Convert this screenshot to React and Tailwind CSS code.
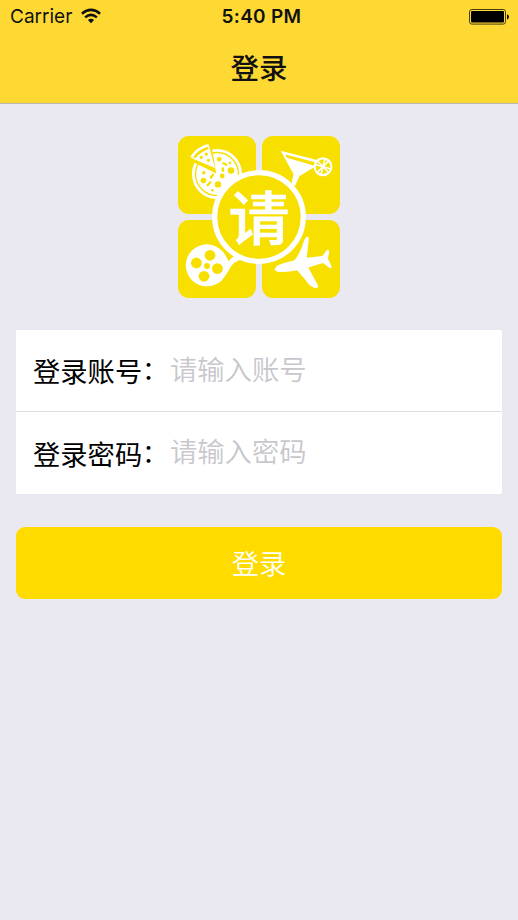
const cjk = "font-['Liberation_Sans','Noto_Sans_CJK_SC',sans-serif]";

function WifiIcon() {
  return (
    <svg className="ml-[9px] h-4 w-5" viewBox="0 0 20 16" fill="none" stroke="#111" strokeWidth="2.5">
      <path d="M0.9 5.7 Q10 -1.9 19.1 5.7" />
      <path d="M4.1 9.4 Q10 4.4 15.9 9.4" />
      <path d="M6.9 12.1 Q10 9.3 13.1 12.1 L10 15.3Z" fill="#111" stroke="none" />
    </svg>
  );
}

function BatteryIcon() {
  return (
    <svg className="mt-px h-4 w-10" viewBox="0 0 40 16">
      <rect x="0.5" y="0.5" width="36" height="14.6" rx="2.3" fill="none" stroke="#4b3f10" strokeWidth="1" />
      <rect x="2" y="2" width="33" height="11.6" rx="1" fill="#000" />
      <path d="M38 5.2 Q40 5.8 40 7.8 Q40 9.8 38 10.4Z" fill="#000" />
    </svg>
  );
}

function Logo() {
  const y = '#f7df00';
  return (
    <svg className="h-[162px] w-[162px]" viewBox="178 136 162 162">
      <g fill={y}>
        <rect x="178" y="136" width="78" height="78" rx="11" />
        <rect x="262" y="136" width="78" height="78" rx="11" />
        <rect x="178" y="220" width="78" height="78" rx="11" />
        <rect x="262" y="220" width="78" height="78" rx="11" />
      </g>

      {/* pizza */}
      <circle cx="217" cy="174" r="23.6" fill={y} stroke="#fff" strokeWidth="2.9" />
      <circle cx="217" cy="174" r="20.8" fill="#fff" />
      <path d="M216.2 173.4 L190 160.6 L187 150 L200 143 L211.8 147Z" fill={y} />
      <path d="M214.2 166.6 L195 158.4 Q200.5 152 208.6 149Z" fill="#fff" />
      <path d="M191.4 157.4 Q197.5 148 208.5 145.3" fill="none" stroke="#fff" strokeWidth="2.7" />
      <path d="M191.6 157.3 L213.9 166.8 L208.3 145.3" fill="none" stroke="#fff" strokeWidth="1.3" />
      <g fill={y}>
        <circle cx="201.3" cy="157.4" r="1.6" />
        <circle cx="206.3" cy="154.2" r="1.6" />
        <circle cx="208.4" cy="160.3" r="1.6" />
        <circle cx="219.2" cy="159.3" r="2.3" />
        <circle cx="231" cy="170.5" r="3.3" />
        <circle cx="203.5" cy="180.5" r="2.8" />
        <circle cx="218" cy="184.4" r="3.2" />
        <circle cx="222.2" cy="176" r="2.4" />
        <circle cx="203.8" cy="172.8" r="1.8" />
        <circle cx="230" cy="162.8" r="1.4" />
      </g>
      <g stroke={y} strokeWidth="2.4" strokeLinecap="round">
        <path d="M223.3 163.3 L226.3 164.8" />
        <path d="M222.8 168.5 L222.9 170.8" />
        <path d="M213 174.8 L210.8 177.6" />
        <path d="M210.3 182.3 L207.6 185.2" />
        <path d="M212.2 190 L212.6 190.4" />
      </g>

      {/* cocktail glass */}
      <path d="M280.6 150.7 L318 160.3 L315.8 166.3 L299.5 176 L295 186 L291.5 184 L293.5 174Z" fill="#fff" />
      <path d="M285.2 154.6 L315.2 162.3 L313.6 165.4 L287 157.8Z" fill={y} />
      <circle cx="323" cy="166.7" r="8.4" fill={y} stroke="#fff" strokeWidth="2.2" />
      <g stroke="#fff" strokeWidth="1.6">
        <path d="M315 164.5 L331 168.9" />
        <path d="M325.1 158.7 L320.9 174.7" />
        <path d="M317.2 172.5 L328.8 160.9" />
        <path d="M317.2 160.9 L328.8 172.5" />
      </g>

      {/* film reel */}
      <circle cx="206.8" cy="265.3" r="21" fill="#fff" />
      <path d="M223 252 Q227 257 228.5 261.3 Q231.5 257.5 238 253.5 L243 259 Q233.5 261.5 230.5 267 Q226.5 275.5 219 283Z" fill="#fff" />
      <g fill={y}>
        <circle cx="210" cy="255.3" r="5.4" />
        <circle cx="196.4" cy="263" r="5.4" />
        <circle cx="217.4" cy="268.6" r="5.4" />
        <circle cx="204" cy="276.3" r="5.4" />
        <circle cx="207" cy="266" r="3" />
      </g>

      {/* plane */}
      <path
        d="M274.6 269.2 Q276 265 284 263 L294.5 260.3 Q300 254 304 241 Q305.5 236.6 308.2 236.6 Q309.2 238 308.3 244 L306.8 257.8 L322.3 256 L327.2 249.8 Q329.6 249.8 329.2 252 L327.9 258.4 L331.7 266.6 Q331.6 268.6 329.6 268 L323 263 L308.3 267.4 L318.3 286 Q317.6 288.8 315 288 Q309 286 305.5 280 L297 270.3 Q288 272.6 280 272 Q275 271.5 274.6 269.2Z"
        fill="#fff"
      />

      {/* centre badge */}
      <circle cx="259" cy="217" r="44.3" fill={y} stroke="#fff" strokeWidth="5.2" />
      <text
        transform="translate(259 240) scale(1 0.95)"
        textAnchor="middle"
        fill="#fff"
        stroke="#fff"
        strokeWidth="0.7"
        className="font-['Noto_Sans_CJK_SC',sans-serif] text-[61px] font-medium"
      >
        请
      </text>
    </svg>
  );
}

function Field({ label, placeholder, type }) {
  return (
    <label className="flex h-[82px] items-center pl-[17px] pt-[5px]">
      <span className="w-[137px] shrink-0 whitespace-nowrap text-[27.3px] leading-10 text-black">
        {label}
        <span className="inline-block -translate-y-[3px] text-[25px]">：</span>
      </span>
      <input
        type={type}
        placeholder={placeholder}
        className="mb-1 h-10 min-w-0 flex-1 bg-transparent text-[27.3px] font-[350] outline-none placeholder:text-[#c7c7cd]"
      />
    </label>
  );
}

export default function App() {
  return (
    <div className={`flex h-[920px] w-[518px] flex-col overflow-hidden bg-[#eae9f2] ${cjk}`}>
      <header className="h-[104px] border-b border-[#b9b6b4] bg-[#fed933]">
        <div className="grid h-8 grid-cols-3 items-center pl-[10px] pr-[9px] font-['Inter',sans-serif] text-[#111]">
          <div className="flex items-center text-[19px]">
            <span className="pt-[3px]">Carrier</span>
            <WifiIcon />
          </div>
          <div className="pl-1 pt-[3px] text-center text-[19px] font-semibold tracking-[0.3px]">5:40 PM</div>
          <div className="flex justify-end">
            <BatteryIcon />
          </div>
        </div>
        <h1 className="mt-[17px] text-center text-[28.5px] font-medium leading-10 text-[#111]">登录</h1>
      </header>
      <main className="flex flex-col px-4">
        <div className="mt-8 flex justify-center">
          <Logo />
        </div>
        <form className="mt-8">
          <div className="divide-y divide-[#dddde2] bg-white">
            <Field label="登录账号" placeholder="请输入账号" type="text" />
            <Field label="登录密码" placeholder="请输入密码" type="password" />
          </div>
          <button
            type="button"
            className="mt-[33px] h-[72px] w-full rounded-[9px] bg-[#ffdb00] pt-[5px] text-[27.3px] font-[350] text-white"
          >
            登录
          </button>
        </form>
      </main>
    </div>
  );
}
